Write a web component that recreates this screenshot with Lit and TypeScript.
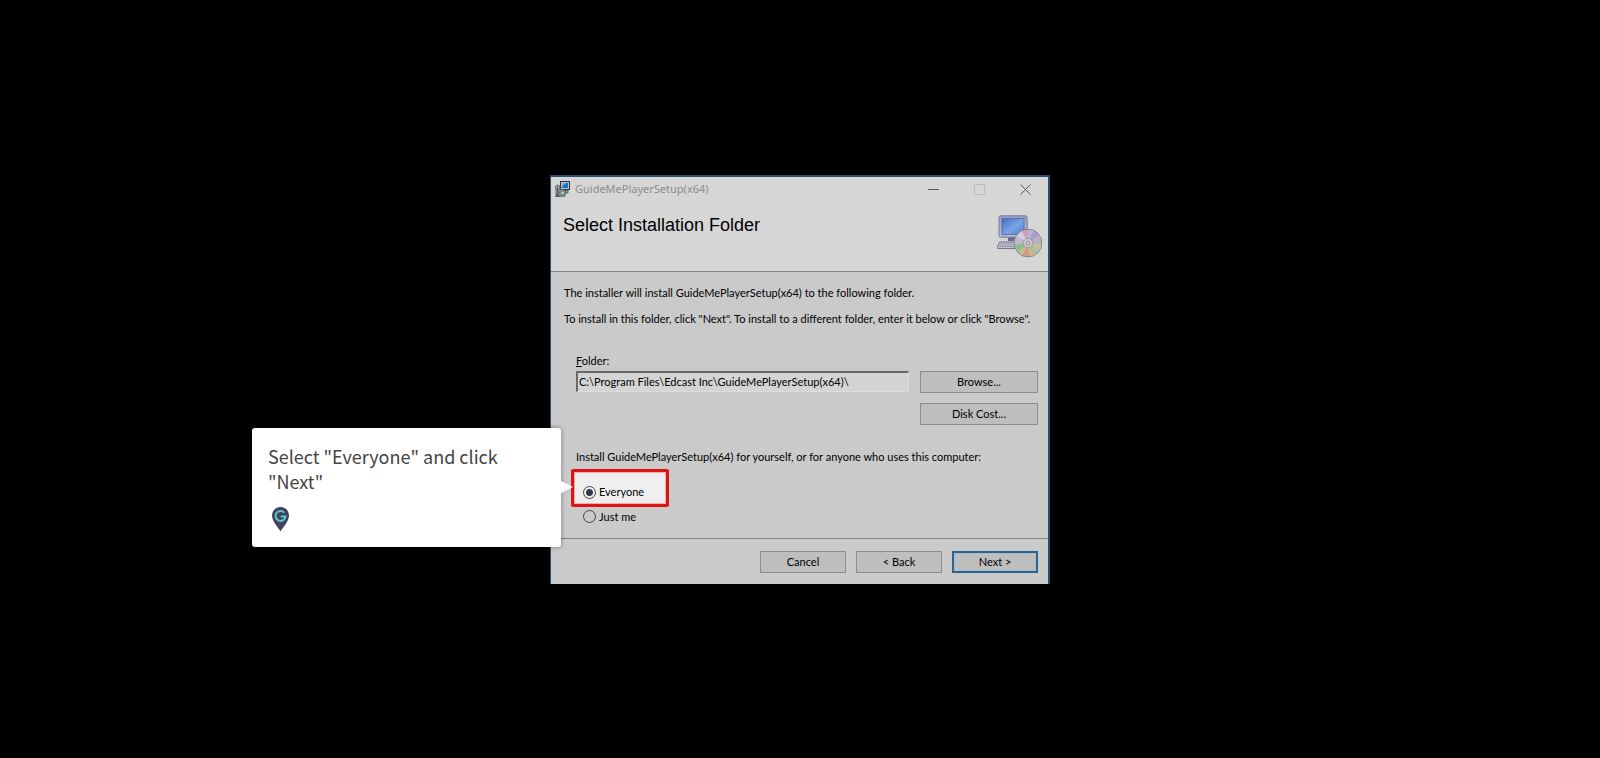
import { LitElement, html, css, svg } from "lit";
import { customElement, property, state } from "lit/decorators.js";

const msiIcon = svg`
  <rect x="6.5" y="0.5" width="9" height="8" fill="#b9c4cc" stroke="#26343f"/>
  <rect x="8" y="2" width="6" height="5" fill="#1f6fb5"/>
  <path d="M8 2h4l-4 4z" fill="#5fb0e0"/>
  <path d="M8 9h6v3h-5z" fill="#8d969c" stroke="#3a454c" stroke-width=".7"/>
  <path d="M1 6l2-2 3 1v10H2V8z" fill="#a3a9ac" stroke="#4a5154" stroke-width=".8"/>
  <path d="M3.5 6v9M1 15.300h5" stroke="#3a4144" stroke-width=".8"/>
  <path d="M5 8l6 1v6.300H5z" fill="#c4c9c6" stroke="#3d4447" stroke-width=".7"/>
  <circle cx="8.600" cy="11.800" r="3" fill="#7fa18b" stroke="#3f5548" stroke-width=".6"/>
  <circle cx="8.600" cy="11.800" r=".9" fill="#e3e8e4"/>`;

const wedge = (a: number, b: number, fill: string) => {
  const p = (d: number) => {
    const r = (d * Math.PI) / 180;
    return `${(31 + 13.5 * Math.sin(r)).toFixed(1)} ${(28 - 13.5 * Math.cos(r)).toFixed(1)}`;
  };
  return svg`<path d="M31 28L${p(a)}A13.5 13.5 0 0 1 ${p(b)}z" fill=${fill}/>`;
};

const setupIcon = svg`
  <defs>
    <linearGradient id="scr" x1="0" y1="0" x2="1" y2="1">
      <stop offset="0" stop-color="#4470c8"/><stop offset=".55" stop-color="#7ba3e6"/><stop offset="1" stop-color="#4f7bd0"/>
    </linearGradient>
    <linearGradient id="case" x1="0" y1="0" x2="0" y2="1">
      <stop offset="0" stop-color="#9a9fc4"/><stop offset="1" stop-color="#babdd2"/>
    </linearGradient>
  </defs>
  <path d="M11 21h8v5h-8z" fill="#6a6c8c"/>
  <path d="M4 .8h24q2.200 0 2.200 2.200v17q0 2.200-2.200 2.200H4q-2 0-2-2.200V3q0-2.200 2-2.200z" fill="url(#case)" stroke="#7477a0"/>
  <path d="M5 3.500h22v16H5z" fill="url(#scr)" stroke="#4c64a6" stroke-width=".8"/>
  <path d="M2.500 27h20v6.500H.8q-.8-1 0-2.500z" fill="#c2c3cf" stroke="#74758f"/>
  <path d="M3.500 29h15M2.500 31.300h15" stroke="#7a7b92" stroke-width="1.200" stroke-dasharray="1.500 1"/>
  <circle cx="31" cy="28" r="13.800" fill="#b3afbf" stroke="#74717f" stroke-width="1"/>
  ${wedge(-28, 2, "#c9a0bd")}${wedge(2, 25, "#b9b5d2")}${wedge(25, 55, "#a99dc6")}
  ${wedge(55, 95, "#b6b3c4")}${wedge(95, 125, "#c8bd9f")}${wedge(125, 150, "#a7c59a")}
  ${wedge(150, 175, "#d2b48a")}${wedge(175, 205, "#cf9a86")}${wedge(205, 228, "#c6c57f")}
  ${wedge(228, 262, "#8dbf92")}${wedge(262, 300, "#b9bcc6")}${wedge(300, 332, "#cfcdd8")}
  <circle cx="31" cy="28" r="4.600" fill="#c9c9d3" stroke="#9694a3" stroke-width=".8"/>
  <circle cx="31" cy="28" r="1.800" fill="#d9d9d9" stroke="#817f90" stroke-width=".8"/>`;

@customElement("guide-tip")
class GuideTip extends LitElement {
  static styles = css`
    :host {
      display: block;
      box-sizing: border-box;
      padding: 16px 16px 15px;
      background: #fff;
      border-radius: 3px;
      box-shadow: 0 0 5px rgba(0, 0, 0, 0.4);
      color: #444;
      font: 400 18px/25px "Noto Sans CJK JP", "Noto Sans", sans-serif;
    }
    :host::after {
      content: "";
      position: absolute;
      left: 100%;
      top: 50%;
      margin-top: -6px;
      border: 6px solid transparent;
      border-left: 12px solid #fff;
      border-right: 0;
    }
    .text { margin: 0 0 13px; }
    .pin { display: block; width: 25px; height: 25px; }
  `;
  render() {
    return html`
      <p class="text"><slot></slot></p>
      <svg class="pin" viewBox="0 0 25 25" aria-hidden="true">
        <path d="M12.500 0C7.700 0 4 3.800 4 8.500c0 5.500 5.500 11 8.500 16 3-5 8.500-10.500 8.500-16C21 3.800 17.300 0 12.500 0z" fill="#3f4260"/>
        <path d="M16.300 5.600A5 5 0 1 0 17.500 9.500H12.700" fill="none" stroke="#5cc9be" stroke-width="2"/>
      </svg>`;
  }
}

@customElement("app-root")
class AppRoot extends LitElement {
  @property() product = "GuideMePlayerSetup(x64)";
  @state() private scope = "everyone";

  static styles = css`
    :host {
      display: grid;
      place-items: center;
      min-height: 100vh;
      background: #000;
      color: #000;
      font: 11px/14px Lato, "Liberation Sans", Arial, sans-serif;
    }
    .window {
      box-sizing: border-box;
      width: 500px;
      max-width: 100%;
      background: #cacaca;
      border: solid #28506e;
      border-width: 2px 2px 0 1px;
    }
    .header {
      background: #d6d6d6;
      border-bottom: 1px solid #858585;
      padding-bottom: 13px;
    }
    .titlebar {
      display: flex;
      align-items: center;
      height: 25px;
      padding-left: 3px;
      color: #8c8c8c;
      font: 11px/16px "Noto Sans", "Open Sans", sans-serif;
    }
    .app-icon { width: 16px; height: 16px; margin-right: 5px; }
    .caption { flex: 1; }
    .control {
      display: grid;
      place-items: center;
      width: 46px;
      height: 25px;
      padding: 0;
      border: 0;
      background: none;
      color: #5a5a5a;
    }
    .control:disabled { color: #bdbdbd; }
    .glyph { width: 11px; height: 11px; fill: none; stroke: currentColor; }
    .banner {
      display: flex;
      justify-content: space-between;
      align-items: flex-start;
      padding: 13px 6px 0 12px;
    }
    .heading { margin: 0; font: 18px/20px "Liberation Sans", Arial, sans-serif; }
    .setup-icon { width: 45px; height: 43px; }
    .content { padding: 14px 10px 11px 13px; }
    .para { margin: 0 0 12px; }
    .folder {
      display: grid;
      grid-template-columns: 1fr 118px;
      gap: 3px 11px;
      padding: 16px 0 0 12px;
    }
    .folder-label { grid-column: 1 / -1; }
    .key { text-decoration: underline; }
    .path {
      box-sizing: border-box;
      width: 100%;
      height: 21px;
      padding: 0 1px 1px;
      border: solid;
      border-width: 2px 1px 1px 2px;
      border-color: #6a6a6a #dcdcdc #dcdcdc #6a6a6a;
      background: #d4d4d4;
      color: inherit;
      font: inherit;
    }
    .side { display: grid; gap: 10px; }
    .btn {
      box-sizing: border-box;
      height: 22px;
      padding: 0;
      border: 1px solid #8e8e8e;
      background: #bebebe;
      color: inherit;
      font: inherit;
    }
    .primary {
      border: 2px solid #2a6592;
      box-shadow: inset 0 0 0 1px #a4bccb;
    }
    .scope { margin: 0; padding: 25px 0 0 7px; border: 0; }
    .legend { float: left; width: 100%; padding: 0 0 0 5px; margin-bottom: 5px; }
    .options { clear: both; display: grid; justify-items: start; }
    .option {
      box-sizing: border-box;
      display: flex;
      align-items: center;
      gap: 3px;
      height: 20px;
      padding-left: 12px;
    }
    .spot {
      position: relative;
      width: 98px;
      height: 38px;
      padding: 9px 0 0 9px;
      border: 3px solid #d81414;
      border-radius: 2px;
      background: #efefef;
      box-shadow: inset 0 0 0 1px #f3a9a9;
    }
    .radio {
      appearance: none;
      box-sizing: border-box;
      width: 13px;
      height: 13px;
      margin: 0;
      border: 1px solid #444;
      border-radius: 50%;
    }
    .radio:checked { background: radial-gradient(circle, #2b3a48 3px, transparent 4px); }
    .tip { position: absolute; right: calc(100% + 13px); top: -44px; width: 309px; }
    .actions {
      display: flex;
      justify-content: flex-end;
      gap: 10px;
      padding: 12px 10px 11px;
      border-top: 1px solid #858585;
    }
    .action { width: 86px; }
  `;

  private pick(e: Event) {
    this.scope = (e.target as HTMLInputElement).value;
  }

  render() {
    return html`
      <main class="window">
        <header class="header">
          <div class="titlebar">
            <svg class="app-icon" viewBox="0 0 16 16" aria-hidden="true">${msiIcon}</svg>
            <span class="caption">${this.product}</span>
            <button class="control" aria-label="Minimize">
              <svg class="glyph" viewBox="0 0 11 11"><path d="M0 5.500h11"/></svg>
            </button>
            <button class="control" aria-label="Maximize" disabled>
              <svg class="glyph" viewBox="0 0 11 11"><path d="M.5.5h10v10H.5z"/></svg>
            </button>
            <button class="control" aria-label="Close">
              <svg class="glyph" viewBox="0 0 11 11"><path d="M.5.5l10 10M10.500.5l-10 10"/></svg>
            </button>
          </div>
          <div class="banner">
            <h1 class="heading">Select Installation Folder</h1>
            <svg class="setup-icon" viewBox="0 0 45 43" aria-hidden="true">${setupIcon}</svg>
          </div>
        </header>
        <section class="content">
          <p class="para">The installer will install ${this.product} to the following folder.</p>
          <p class="para">To install in this folder, click "Next". To install to a different folder, enter it below or click "Browse".</p>
          <div class="folder">
            <label class="folder-label" for="path"><span class="key">F</span>older:</label>
            <div><input class="path" id="path" type="text" value="C:\\Program Files\\Edcast Inc\\GuideMePlayerSetup(x64)\\"></div>
            <div class="side">
              <button class="btn">Browse...</button>
              <button class="btn">Disk Cost...</button>
            </div>
          </div>
          <fieldset class="scope">
            <legend class="legend">Install ${this.product} for yourself, or for anyone who uses this computer:</legend>
            <div class="options">
              <div class="option spot">
                <input class="radio" id="everyone" type="radio" name="scope" value="everyone"
                  .checked=${this.scope === "everyone"} @change=${this.pick}>
                <label for="everyone">Everyone</label>
                <guide-tip class="tip">Select "Everyone" and click "Next"</guide-tip>
              </div>
              <div class="option">
                <input class="radio" id="me" type="radio" name="scope" value="me"
                  .checked=${this.scope === "me"} @change=${this.pick}>
                <label for="me">Just me</label>
              </div>
            </div>
          </fieldset>
        </section>
        <footer class="actions">
          <button class="btn action">Cancel</button>
          <button class="btn action">&lt; Back</button>
          <button class="btn action primary">Next &gt;</button>
        </footer>
      </main>`;
  }
}
